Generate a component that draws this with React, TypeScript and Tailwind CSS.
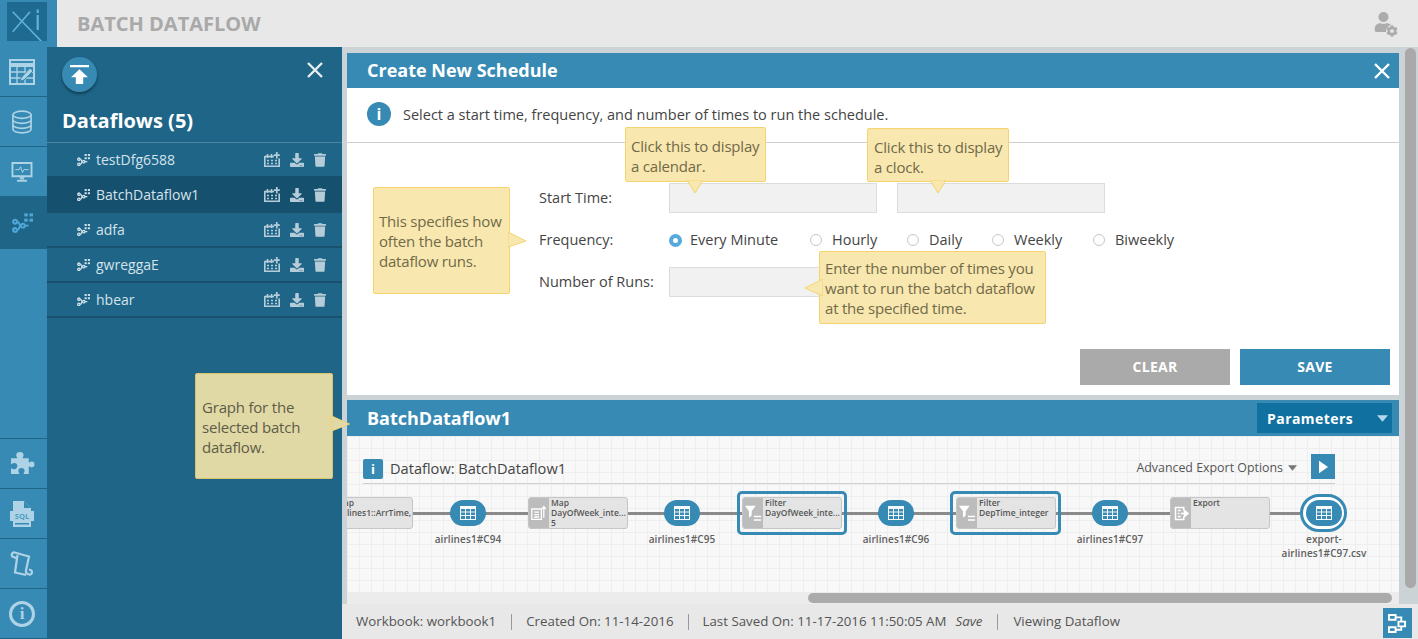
import { FaTrash, FaDownload, FaUser, FaCog } from 'react-icons/fa';

const dataflows = ['testDfg6588', 'BatchDataflow1', 'adfa', 'gwreggaE', 'hbear'];

function CloseIcon({ className }: { className: string }) {
  return (
    <svg viewBox="0 0 16 16" className={className} fill="none" stroke="currentColor" strokeWidth="2.4">
      <path d="M1 1l14 14M15 1 1 15" />
    </svg>
  );
}

function FlowIcon({ className }: { className?: string }) {
  return (
    <svg viewBox="0 0 24 22" className={className} fill="none" stroke="currentColor">
      <circle cx="3.5" cy="9.500" r="2.200" strokeWidth="2.400" />
      <circle cx="3.5" cy="19" r="2.200" strokeWidth="2.400" />
      <circle cx="12.500" cy="14" r="2.200" strokeWidth="2.400" />
      <path d="M6 9.500c3 0 1.500 4.500 4 4.500M6 19c3 0 1.500-5 4-5M15 14h4" strokeWidth="2.200" />
      <g fill="currentColor" stroke="none">
        <rect x="14" y="0" width="4" height="3.500" />
        <rect x="20" y="0" width="4" height="3.500" />
        <rect x="14" y="6" width="4" height="3.500" />
        <rect x="20" y="6" width="4" height="3.500" />
      </g>
    </svg>
  );
}

function TableIcon() {
  return (
    <svg viewBox="0 0 16 14" className="w-[16px] h-[14px]" fill="#fff">
      <path d="M0 0h16v14H0z" fillOpacity="0.95" />
      <path d="M1 3h4v2.500H1zM6 3h4v2.500H6zM11 3h4v2.500h-4zM1 6.500h4V9H1zM6 6.500h4V9H6zM11 6.500h4V9h-4zM1 10h4v3H1zM6 10h4v3H6zM11 10h4v3h-4z" fill="#378ab3" />
    </svg>
  );
}

function CalendarPlus() {
  return (
    <svg viewBox="0 0 16 15" className="w-[16px] h-[15px]" fill="none" stroke="currentColor">
      <path d="M.8 4v10.200h14.400V6.500" strokeWidth="1.600" />
      <path d="M.8 4.500H10" strokeWidth="1.800" />
      <path d="M3.500 2v4M7.500 2v4" strokeWidth="1.500" />
      <path d="M12.800 0v6.500M9.800 3.200h6" strokeWidth="1.700" />
      <path d="M3 8.500h2M7 8.500h2M11 8.500h2M3 11.500h2M7 11.500h2M11 11.500h2" strokeWidth="1.700" />
    </svg>
  );
}

function RailButton({ children, active, last }: { children: React.ReactNode; active?: boolean; last?: boolean }) {
  return (
    <div className={`flex items-center justify-center pr-[3px] ${active ? 'bg-[#1e6588] text-[#4ea7d8] h-[52px]' : 'text-[#aed3e6] h-[50px]'} ${last ? '' : 'border-b border-[#1e6588]'}`}>
      {children}
    </div>
  );
}

function Tip({ className, children }: { className: string; children: React.ReactNode }) {
  return (
    <div className={`absolute z-20 bg-[#f8e7ae] border border-[#f5d36f] rounded-[2px] text-[#716a4a] text-[15px] leading-[20px] tracking-[-0.2px] ${className}`}>
      {children}
    </div>
  );
}

function Arrow({ dir, className }: { dir: 'down' | 'left' | 'right'; className: string }) {
  const pts = dir === 'down' ? '0,0 16,0 8,13' : dir === 'right' ? '0,0 18,9 0,15' : '18,0 0,9 18,17';
  const box = dir === 'down' ? 'w-[16px] h-[13px]' : 'w-[18px] h-[17px]';
  return (
    <svg viewBox={dir === 'down' ? '0 0 16 13' : '0 0 18 17'} className={`absolute ${box} ${className}`}>
      <polygon points={pts} fill="#f8e7ae" stroke="#f5d36f" />
    </svg>
  );
}

function Radio({ label, checked, className }: { label: string; checked?: boolean; className: string }) {
  return (
    <label className={`flex items-center ${checked ? 'gap-[8px]' : 'gap-[10px]'} ${className}`}>
      {checked ? (
        <span className="w-[13px] h-[13px] rounded-full border-[4px] border-[#55a9dc] bg-white" />
      ) : (
        <span className="w-[12px] h-[12px] rounded-full border border-[#c8c8c8] bg-white" />
      )}
      <span className="pb-[1px]">{label}</span>
    </label>
  );
}

function Pill({ left, label, wide }: { left: number; label: React.ReactNode; wide?: boolean }) {
  return (
    <div className="absolute top-[64px] w-[36px]" style={{ left }}>
      {wide && <div className="absolute -left-[6px] -top-[6px] w-[47px] h-[38px] rounded-[20px] border-[3px] border-[#378ab3] bg-white" />}
      <div className="relative h-[26px] rounded-[14px] bg-[#378ab3] flex items-center justify-center">
        <TableIcon />
      </div>
      <div className="absolute top-[32px] -left-[40px] w-[116px] text-center text-[10px] leading-[14px] font-semibold text-[#606060] tracking-[0.1px]">
        {label}
      </div>
    </div>
  );
}

function NodeGlyph({ kind }: { kind: 'map' | 'filter' | 'export' }) {
  if (kind === 'filter') {
    return (
      <svg viewBox="0 0 20 20" className="w-[18px] h-[18px]" fill="#fff">
        <path d="M1 2h12L8.500 8v5L5.500 15V8z" />
        <path d="M11 13h8v1.600h-8zM11 17h8v1.600h-8z" />
      </svg>
    );
  }
  if (kind === 'export') {
    return (
      <svg viewBox="0 0 20 20" className="w-[15px] h-[15px]" fill="none" stroke="#fff" strokeWidth="2">
        <path d="M13 6V2H2v16h11v-4M5 6h4M5 10h2M5 14h4" />
        <path d="M9 10h7M14 6l5 4-5 4z" fill="#fff" />
      </svg>
    );
  }
  return (
    <svg viewBox="0 0 20 20" className="w-[16px] h-[16px]" fill="none" stroke="#fff" strokeWidth="1.600">
      <path d="M1 5h12v13H1zM4 9h6M4 12h6M4 15h6M16 16V2M13.500 5 16 2l2.500 3" />
    </svg>
  );
}

function FlowNode({ left, kind, lines }: { left: number; kind: 'map' | 'filter' | 'export'; lines: string[] }) {
  return (
    <div className="absolute top-[61px] w-[100px] h-[32px] rounded-[3px] bg-[#e4e4e4] border border-[#c6c6c6] flex overflow-hidden" style={{ left }}>
      <div className="w-[20px] shrink-0 bg-[#bcbcbc] flex items-center justify-center">
        <NodeGlyph kind={kind} />
      </div>
      <div className="pl-[2px] text-[8.5px] leading-[10px] font-semibold text-[#555] whitespace-nowrap">
        {lines.map((l) => (
          <div key={l}>{l}</div>
        ))}
      </div>
    </div>
  );
}

export default function App() {
  return (
    <div className="relative w-[1418px] h-[639px] overflow-hidden flex flex-col font-['Open_Sans',sans-serif] bg-[#ccd3d7]">
      {/* top bar */}
      <header className="h-[47px] shrink-0 flex bg-[#e8e8e8]">
        <div className="w-[57px] bg-[#378ab3] pl-[7px] pt-[2px]">
          <svg viewBox="0 0 40 39" className="w-[40px] h-[39px] bg-[#1f6a91]">
            <path d="M5.700 9.700 35 40M23 9.700 5.700 29.700" stroke="#5fb2dc" strokeWidth="1.600" fill="none" />
            <path d="M30.700 13v15M30.700 7.500v3.500" stroke="#5fb2dc" strokeWidth="2.200" fill="none" />
          </svg>
        </div>
        <h1 className="ml-[20px] self-center text-[20px] font-bold text-[#a9a9a9] leading-none">BATCH DATAFLOW</h1>
        <div className="relative ml-auto mr-[20px] mt-[12px] w-[24px] h-[24px] text-[#acacac]">
          <FaUser className="w-[19px] h-[20px]" />
          <FaCog className="absolute right-0 bottom-[-1px] w-[12px] h-[12px] bg-[#e8e8e8] rounded-full" />
        </div>
      </header>

      <div className="flex-1 flex min-h-0">
        {/* icon rail */}
        <nav className="w-[47px] shrink-0 bg-[#378ab3] flex flex-col">
          <RailButton>
            <svg viewBox="0 0 26 26" className="w-[26px] h-[26px]" fill="none" stroke="currentColor" strokeWidth="2">
              <path d="M1 1h24v24H1z" />
              <path d="M1 6h24" strokeWidth="4" />
              <path d="M1 13h24M1 19h24M8 7v18M16 7v18" strokeWidth="1.300" />
              <path d="M12 19 21 9l3 3-9 9-4 1z" fill="currentColor" stroke="#378ab3" strokeWidth="1" />
            </svg>
          </RailButton>
          <RailButton>
            <svg viewBox="0 0 22 26" className="w-[20px] h-[24px]" fill="none" stroke="currentColor" strokeWidth="1.800">
              <ellipse cx="11" cy="5" rx="10" ry="4" />
              <path d="M1 5v16c0 2.200 4.500 4 10 4s10-1.800 10-4V5M1 10.500c0 2.200 4.500 4 10 4s10-1.800 10-4M1 16c0 2.200 4.500 4 10 4s10-1.800 10-4" />
            </svg>
          </RailButton>
          <RailButton>
            <svg viewBox="0 0 22 21" className="w-[22px] h-[20px]" fill="none" stroke="currentColor">
              <path d="M1 1h20v14H1z" strokeWidth="2" />
              <path d="M4 8h4l1.500-3 2 6 1.500-3h5" strokeWidth="1" />
              <path d="M9 16h4v2H9zM6 19h10v1.500H6z" fill="currentColor" strokeWidth="0.500" />
            </svg>
          </RailButton>
          <RailButton active>
            <FlowIcon className="w-[21px] h-[20px]" />
          </RailButton>
          <div className="flex-1 border-b border-[#1e6588]" />
          <RailButton>
            <svg viewBox="0 0 24 24" className="w-[25px] h-[25px]" fill="currentColor">
              <path d="M1 7h6c0-1-1-1.500-1-3a3.500 3 0 0 1 7 0c0 1.500-1 2-1 3h6v4c1 0 1.500-1 3-1a2.500 2.800 0 0 1 0 5.600c-1.500 0-2-1-3-1V22h-5c0-1 1-1.500 1-2.800a3 2.800 0 0 0-6 0c0 1.300 1 1.800 1 2.800H1v-5.500c1 0 1.500 1 3 1a3 3 0 0 0 0-6c-1.500 0-2 1-3 1z" />
            </svg>
          </RailButton>
          <RailButton>
            <div className="relative w-[24px] h-[26px]">
              <svg viewBox="0 0 24 26" className="w-[24px] h-[26px]" fill="currentColor">
                <path d="M3 0h11l7 7v19H3z" />
                <path d="M14 0v7h7" fill="#378ab3" />
                <path d="M0 10h24v10H0z" />
                <path d="M5 22h14v1.500H5z" fill="#378ab3" />
              </svg>
              <span className="absolute left-0 top-[10px] w-[24px] text-center text-[7.5px] leading-[10px] font-bold text-[#4d9cc4]">SQL</span>
            </div>
          </RailButton>
          <RailButton>
            <svg viewBox="0 0 24 26" className="w-[24px] h-[26px]" fill="none" stroke="currentColor" strokeWidth="2.200">
              <path d="M6 7 2.500 5.500C1 4.500 2 1 4.500 1.500L19 5.500l-3 14c-.5 2 1 3.500 3 4 1.500.3 3-.8 3-2.300 0-1.500-1-2.500-3-2.700M16 24 5 21.500 7.500 4" />
            </svg>
          </RailButton>
          <RailButton>
            <div className="w-[26px] h-[26px] rounded-full border-[3px] border-[#aed3e6] flex items-center justify-center font-['Liberation_Serif',serif] font-bold text-[17px] leading-none">i</div>
          </RailButton>
        </nav>

        {/* dataflow list */}
        <aside className="w-[295px] shrink-0 bg-[#1e6588] flex flex-col relative">
          <div className="flex items-start justify-between pl-[15px] pr-[19px] pt-[10px]">
            <div className="w-[35px] h-[35px] rounded-full bg-[#378ab3] shadow-[0_2px_3px_rgba(0,0,0,0.4)] flex items-center justify-center">
              <svg viewBox="0 0 18 18" className="w-[19px] h-[19px]" fill="#fff">
                <path d="M0 0h18v2.200H0zM9 4l8 7.500h-4.500V18h-7v-6.500H1z" />
              </svg>
            </div>
            <CloseIcon className="w-[16px] h-[16px] text-[#e6eef2] mt-[5px]" />
          </div>
          <h2 className="pl-[15px] mt-[15px] h-[35px] text-[20px] leading-[28px] font-bold text-white">Dataflows (5)</h2>
          <ul className="border-t border-[#4a86a3]">
            {dataflows.map((name, i) => (
              <li
                key={name}
                className={`h-[35px] flex items-center pl-[30px] border-b-2 border-[#18516e] text-[14px] text-[#d5e3ea] ${i === 1 ? 'bg-[#15506f]' : ''}`}
              >
                <FlowIcon className="w-[13px] h-[12px] text-[#d5e3ea] shrink-0" />
                <span className="ml-[6px]">{name}</span>
                <div className="ml-auto mr-[16px] flex items-center gap-[10px] text-[#b6cdd9]">
                  <CalendarPlus />
                  <FaDownload className="w-[14px] h-[14px]" />
                  <FaTrash className="w-[12px] h-[14px]" />
                </div>
              </li>
            ))}
          </ul>
        </aside>

        {/* main */}
        <main className="flex-1 min-w-0 flex flex-col relative">
          <div className="flex-1 min-h-0 flex pl-[5px] pt-[6px]">
            <div className="w-[1052px] flex flex-col">
              <section className="h-[342px] bg-white flex flex-col">
                <div className="h-[35px] shrink-0 bg-[#378ab3] pl-[20px] pr-[9px] flex items-center justify-between">
                  <h2 className="text-[18px] font-bold text-white">Create New Schedule</h2>
                  <CloseIcon className="w-[16px] h-[16px] text-white" />
                </div>
                <div className="h-[55px] shrink-0 border-b border-[#cfcfcf] flex items-center pl-[20px] pb-[2px]">
                  <div className="w-[24px] h-[24px] rounded-full bg-[#378ab3] flex items-center justify-center text-white font-bold text-[16px] leading-none">i</div>
                  <p className="ml-[12px] mt-[2px] text-[14.5px] font-medium text-[#444]">Select a start time, frequency, and number of times to run the schedule.</p>
                </div>
                <div className="flex flex-col gap-[12px] pl-[192px] pt-[40px] text-[14.5px] font-medium text-[#444]">
                  <div className="flex items-center h-[30px]">
                    <span className="w-[130px] pb-[1px]">Start Time:</span>
                    <div className="w-[208px] h-[30px] bg-[#f1f1f1] border border-[#dcdcdc]" />
                    <div className="ml-[20px] w-[208px] h-[30px] bg-[#f1f1f1] border border-[#dcdcdc]" />
                  </div>
                  <div className="flex items-center h-[30px]">
                    <span className="w-[130px] pb-[1px]">Frequency:</span>
                    <Radio label="Every Minute" checked className="w-[141px]" />
                    <Radio label="Hourly" className="w-[97px]" />
                    <Radio label="Daily" className="w-[85px]" />
                    <Radio label="Weekly" className="w-[101px]" />
                    <Radio label="Biweekly" className="w-[90px]" />
                  </div>
                  <div className="flex items-center h-[30px]">
                    <span className="w-[130px] pb-[1px]">Number of Runs:</span>
                    <div className="w-[208px] h-[30px] bg-[#f1f1f1] border border-[#dcdcdc]" />
                  </div>
                </div>
                <div className="mt-auto flex justify-end gap-[10px] pr-[9px] pb-[10px]">
                  <button className="w-[150px] h-[36px] pb-[2px] bg-[#aaaaaa] text-white text-[14px] font-bold tracking-[0.3px]">CLEAR</button>
                  <button className="w-[150px] h-[36px] pb-[2px] bg-[#378ab3] text-white text-[14px] font-bold tracking-[0.3px]">SAVE</button>
                </div>
              </section>

              <section className="mt-[5px] flex-1 min-h-0 flex flex-col bg-[#f7f7f7]">
                <div className="h-[36px] shrink-0 bg-[#378ab3] pl-[20px] pr-[7px] flex items-center justify-between">
                  <h2 className="text-[18px] font-bold text-white">BatchDataflow1</h2>
                  <div className="w-[135px] h-[30px] bg-[#10709f] flex items-center justify-between pl-[10px] pr-[4px] text-white text-[14px] font-bold tracking-[0.45px]">
                    Parameters
                    <svg viewBox="0 0 10 6" className="w-[11px] h-[7px]" fill="#b4d8ea"><path d="M0 0h10L5 6z" /></svg>
                  </div>
                </div>
                <div className="relative flex-1 overflow-hidden bg-[#f8f8f8] bg-[linear-gradient(#eeeeee_1px,transparent_1px),linear-gradient(90deg,#eeeeee_1px,transparent_1px)] bg-[size:12px_12px]">
                  <div className="absolute left-[16px] top-[15px] w-[972px] h-[33px] border-b border-[#cfcfcf] flex items-start">
                    <div className="mt-[8px] w-[20px] h-[20px] rounded-[2px] bg-[#378ab3] flex items-center justify-center text-white text-[13px] font-bold leading-none">i</div>
                    <span className="ml-[7px] mt-[7px] text-[14.6px] leading-[20px] font-medium text-[#444]">Dataflow: BatchDataflow1</span>
                    <div className="ml-auto flex items-center text-[12.4px] text-[#555]">
                      <span className="mt-[4px] leading-[26px]">Advanced Export Options</span>
                      <svg viewBox="0 0 10 6" className="ml-[5px] mt-[4px] w-[9px] h-[6px]" fill="#777"><path d="M0 0h10L5 6z" /></svg>
                      <div className="ml-[14px] mt-[1px] w-[24px] h-[25px] bg-[#378ab3] flex items-center justify-center">
                        <svg viewBox="0 0 10 14" className="w-[9px] h-[14px]" fill="#fff"><path d="M0 0l10 7-10 7z" /></svg>
                      </div>
                    </div>
                  </div>

                  <div className="absolute left-0 top-[76px] w-[953px] h-[3px] bg-[#8a8a8a]" />

                  <FlowNode left={-34} kind="map" lines={['Map', 'airlines1::ArrTime,']} />
                  <Pill left={103} label="airlines1#C94" />
                  <FlowNode left={181} kind="map" lines={['Map', 'DayOfWeek_inte...', '5']} />
                  <Pill left={317} label="airlines1#C95" />
                  <div className="absolute left-[390px] top-[55px] w-[110px] h-[44px] rounded-[5px] border-[3px] border-[#378ab3]" />
                  <FlowNode left={395} kind="filter" lines={['Filter', 'DayOfWeek_inte...']} />
                  <Pill left={531} label="airlines1#C96" />
                  <div className="absolute left-[603px] top-[55px] w-[111px] h-[44px] rounded-[5px] border-[3px] border-[#378ab3]" />
                  <FlowNode left={609} kind="filter" lines={['Filter', 'DepTime_integer']} />
                  <Pill left={745} label="airlines1#C97" />
                  <FlowNode left={823} kind="export" lines={['Export']} />
                  <Pill left={959} wide label={<>export-<br />airlines1#C97.csv</>} />

                  <div className="absolute left-0 right-0 bottom-0 h-[12px] bg-[#ececec]">
                    <div className="absolute left-[461px] w-[584px] top-[1px] h-[10px] rounded-[5px] bg-[#ababab]" />
                  </div>
                </div>
              </section>
            </div>
            <div className="ml-[6px] w-[11px] h-[540px] -mt-[5px] rounded-[6px] bg-[#a9a9a9]" />
          </div>

          <footer className="h-[35px] shrink-0 bg-[#e8e8e8] flex items-center pl-[14px] text-[13.3px] text-[#555] relative">
            <span>Workbook: workbook1</span>
            <span className="ml-[15px] mr-[14px] w-px h-[16px] bg-[#999]" />
            <span>Created On: 11-14-2016</span>
            <span className="mx-[14px] w-px h-[16px] bg-[#999]" />
            <span>Last Saved On: 11-17-2016 11:50:05 AM</span>
            <span className="ml-[9px] italic">Save</span>
            <span className="mx-[15px] w-px h-[16px] bg-[#999]" />
            <span>Viewing Dataflow</span>
            <div className="absolute right-[6px] top-[4px] w-[29px] h-[30px] bg-[#378ab3] flex items-center justify-center">
              <svg viewBox="0 0 20 20" className="w-[19px] h-[19px]" fill="none" stroke="#fff" strokeWidth="2">
                <path d="M1 1h7v5H1zM11 8h7v5h-7zM1 14h7v5H1zM8 3.500h6V8M14 13v3.500H8" />
              </svg>
            </div>
          </footer>
        </main>
      </div>

      {/* callouts */}
      <Tip className="left-[625px] top-[127px] w-[141px] h-[55px] px-[5px] pt-[8px]">
        Click this to display a calendar.
        <Arrow dir="down" className="left-[61px] top-[52px]" />
      </Tip>
      <Tip className="left-[867px] top-[128px] w-[142px] h-[54px] pl-[6px] pt-[8px]">
        Click this to display<br />a clock.
        <Arrow dir="down" className="left-[62px] top-[51px]" />
      </Tip>
      <Tip className="left-[373px] top-[187px] w-[137px] h-[107px] px-[5px] flex items-center">
        This specifies how often the batch dataflow runs.
        <Arrow dir="right" className="left-[134px] top-[44px]" />
      </Tip>
      <Tip className="left-[819px] top-[251px] w-[227px] h-[73px] pl-[5px] pr-[4px] pt-[6px]">
        Enter the number of times you want to run the batch dataflow at the specified time.
        <Arrow dir="left" className="-left-[15px] top-[27px]" />
      </Tip>
      <div className="absolute z-20 left-[195px] top-[373px] w-[138px] h-[106px] px-[6px] pt-[2px] flex items-center bg-[#e0d9a6] border border-[#d9c46c] rounded-[2px] text-[#5f5c46] text-[15px] leading-[20px] tracking-[-0.2px]">
        Graph for the selected batch dataflow.
        <svg viewBox="0 0 18 17" className="absolute w-[19px] h-[17px] left-[135px] top-[42px]">
          <polygon points="0,0 18,8 0,15" fill="#e0d9a6" stroke="#f5d36f" />
        </svg>
      </div>
    </div>
  );
}
